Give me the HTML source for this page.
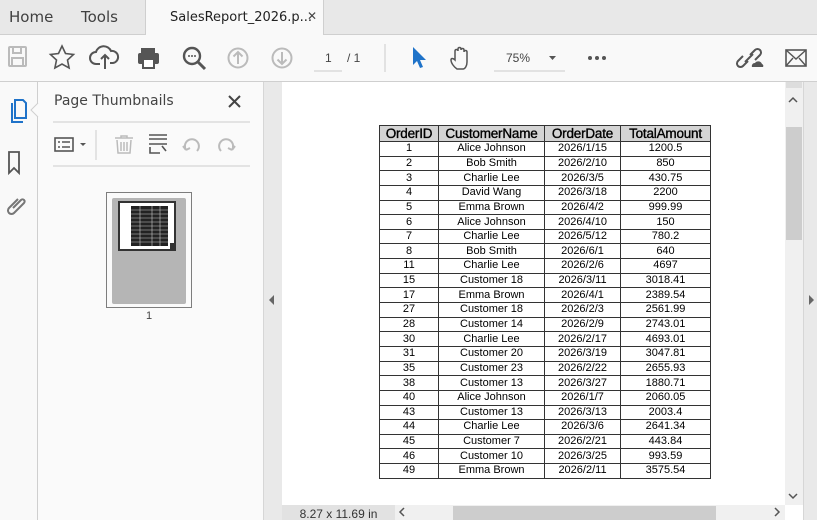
<!DOCTYPE html>
<html><head><meta charset="utf-8"><style>
*{margin:0;padding:0;box-sizing:border-box}
body{width:817px;height:520px;overflow:hidden;background:#fff;font-family:"Liberation Sans",Arial,sans-serif;position:relative}
.abs{position:absolute}
#tabs{left:0;top:0;width:817px;height:35px;background:#e8e8e8;border-bottom:1px solid #cfcfcf}
.tab{top:8px;font-size:15px;color:#404040;font-family:"DejaVu Sans","Liberation Sans",sans-serif}
#atab{left:145px;top:0;width:179px;height:35px;background:#f9f9f9;border-left:1px solid #cfcfcf;border-right:1px solid #cfcfcf}
#tool{left:0;top:35px;width:817px;height:47px;background:#f9f9f9;border-bottom:1px solid #cfcfcf}
#rail{left:0;top:82px;width:38px;height:438px;background:#f9f9f9;border-right:1px solid #cfcfcf}
#panel{left:38px;top:82px;width:225px;height:438px;background:#fafafa}
#strip{left:263px;top:82px;width:19px;height:438px;background:#e9e9e9;border-left:1px solid #d6d6d6}
#rstrip{left:803px;top:82px;width:14px;height:438px;background:#e9e9e9;border-left:1px solid #d6d6d6}
#vs{left:785px;top:82px;width:18px;height:423px;background:#f0f0f0}
table{position:absolute;left:379px;top:125px;border-collapse:collapse;font-size:11px;color:#000}
td,th{border:1px solid #333;text-align:center;height:14.65px;padding:0;line-height:13px}
th{background:#d4d4d4;font-size:13.5px;font-weight:normal;height:16px;-webkit-text-stroke:.35px #000;letter-spacing:-.2px}
</style></head><body>
<div id="tabs" class="abs"></div>
<div class="abs tab" style="left:9px">Home</div>
<div class="abs tab" style="left:81px">Tools</div>
<div id="atab" class="abs"></div>
<div class="abs tab" style="left:170px;top:10px;font-size:13px;color:#222">SalesReport_2026.p...</div>
<div class="abs" style="left:307px;top:9px;font-size:12px;color:#444">✕</div>
<div id="tool" class="abs"></div>
<svg class="abs" style="left:0;top:35px" width="817" height="47">
 <g fill="none" stroke="#bbb" stroke-width="2"><rect x="9" y="12" width="17" height="19" rx="1"/><rect x="13" y="12" width="8" height="6"/><rect x="12" y="23" width="11" height="8"/></g>
 <path d="M62 11l3.5 7.5 8 1-6 5.5 1.6 8-7.1-4-7.1 4 1.6-8-6-5.5 8-1z" fill="none" stroke="#555" stroke-width="1.6"/>
 <path d="M100 29h-4a6 6 0 0 1 0-12 8 8 0 0 1 15-1 6 6 0 0 1 2 12h-3M105 34V20m-4 4l4-4 4 4" fill="none" stroke="#555" stroke-width="2"/>
 <rect x="141" y="13" width="14" height="5" fill="#555"/><rect x="138" y="18" width="21" height="11" rx="2" fill="#555"/><rect x="143" y="24" width="11" height="9" fill="#fff" stroke="#555" stroke-width="2"/>
 <circle cx="192" cy="21" r="8" fill="none" stroke="#555" stroke-width="2.4"/><path d="M198 27l7 7" stroke="#555" stroke-width="3"/><circle cx="189" cy="21" r="1" fill="#555"/><circle cx="192" cy="21" r="1" fill="#555"/><circle cx="195" cy="21" r="1" fill="#555"/>
 <circle cx="238" cy="23" r="9.5" fill="none" stroke="#bbb" stroke-width="2"/><path d="M238 29v-12m-4.5 4.5l4.5-4.5 4.5 4.5" fill="none" stroke="#bbb" stroke-width="2"/>
 <circle cx="282" cy="23" r="9.5" fill="none" stroke="#bbb" stroke-width="2"/><path d="M282 17v12m-4.5-4.5l4.5 4.5 4.5-4.5" fill="none" stroke="#bbb" stroke-width="2"/>
 <line x1="314" y1="36" x2="342" y2="36" stroke="#ccc"/>
 <line x1="385" y1="9" x2="385" y2="37" stroke="#ccc"/>
 <path d="M413 12v18l4-4 3 7 3-1-3-7h6z" fill="#1f73c9"/>
 <path d="M457 34c-3-2-6-6-6-9 0-2 2-2 4 0v-9c0-2 3-2 3 0v-2c0-2 3-2 3 0v1c0-2 3-2 3 0v2c0-2 3-2 3 0v10c0 4-2 7-4 7z" fill="none" stroke="#555" stroke-width="1.5"/>
 <line x1="494" y1="36" x2="565" y2="36" stroke="#ccc"/>
 <path d="M549 21h7l-3.5 4z" fill="#555"/>
 <circle cx="590" cy="23" r="2" fill="#555"/><circle cx="597" cy="23" r="2" fill="#555"/><circle cx="604" cy="23" r="2" fill="#555"/>
 <path d="M748 26l-5 5a3.5 3.5 0 0 1-5-5l5-5M750 20l5-5a3.5 3.5 0 0 1 5 5l-5 5M745 27l8-8" fill="none" stroke="#555" stroke-width="2"/>
 <path d="M752 32a3 3 0 0 1 3-4 4 4 0 0 1 7 1 2 2 0 0 1 1 3z" fill="#555"/>
 <rect x="786" y="15" width="20" height="16" fill="none" stroke="#555" stroke-width="1.6"/><path d="M786 15l10 9 10-9M786 31l7-8M806 31l-7-8" fill="none" stroke="#555" stroke-width="1.4"/>
</svg>
<div class="abs" style="left:325px;top:51px;font-size:12px;color:#444">1</div>
<div class="abs" style="left:347px;top:51px;font-size:12px;color:#444">/ 1</div>
<div class="abs" style="left:506px;top:51px;font-size:12px;color:#444">75%</div>
<div id="rail" class="abs"></div>
<div id="panel" class="abs"></div>
<svg class="abs" style="left:0;top:82px" width="263" height="438">
 <path d="M38 21l-7 7 7 7" fill="#fafafa" stroke="#cfcfcf"/>
 <g fill="none" stroke="#1f73c9" stroke-width="2"><path d="M12 21v19h11"/><path d="M15 18h8l3 3v15h-11z"/></g>
 <path d="M9 70v21l5-5 5 5v-21z" fill="none" stroke="#555" stroke-width="1.8"/>
 <path d="M18 117l-9 9a3 3 0 0 0 5 5l10-10a2 2 0 0 0-3-3l-8 8" fill="none" stroke="#777" stroke-width="2"/>
 <line x1="53" y1="40" x2="250" y2="40" stroke="#ccc"/>
 <line x1="53" y1="84" x2="250" y2="84" stroke="#ccc"/>
 <path d="M229 14l11 11M240 14l-11 11" stroke="#444" stroke-width="2"/>
 <rect x="55" y="56" width="18" height="13" fill="none" stroke="#555" stroke-width="1.6"/><path d="M58 60h2M62 60h8M58 65h2M62 65h8" stroke="#555" stroke-width="1.6"/><path d="M80 61h6l-3 3z" fill="#555"/>
 <line x1="96" y1="48" x2="96" y2="78" stroke="#ccc"/>
 <path d="M115 56h18M121 56v-2h6v2M117 58l1 13h12l1-13M121 60v9M124 60v9M127 60v9" fill="none" stroke="#bbb" stroke-width="1.5"/>
 <path d="M149 53h18M149 57h18M149 62h18M150 65v6h10M162 64l4 5" fill="none" stroke="#555" stroke-width="1.6"/>
 <path d="M186 68a7 7 0 1 1 11 1M186 68l-3-4M186 68l4-2" fill="none" stroke="#bbb" stroke-width="2"/>
 <path d="M232 68a7 7 0 1 0-11 1M232 68l3-4M232 68l-4-2" fill="none" stroke="#bbb" stroke-width="2"/>
 <rect x="106.5" y="110.5" width="85" height="115" fill="none" stroke="#000" stroke-dasharray="1,1"/>
 <rect x="112" y="116" width="74" height="106" rx="2" fill="#b5b5b5"/>
 <rect x="119" y="120" width="56" height="48" fill="#fff" stroke="#333" stroke-width="2"/>
 <rect x="131" y="124" width="37" height="40" fill="#222"/>
 <g stroke="#ccc" stroke-width=".6"><path d="M131 128h37M131 132h37M131 136h37M131 140h37M131 144h37M131 148h37M131 152h37M131 156h37M131 160h37M140 124v40M152 124v40M160 124v40"/></g>
 <rect x="170" y="161" width="6" height="6" fill="#333"/>
</svg>
<div class="abs" style="left:146px;top:310px;font-size:11px;color:#444">1</div>
<div class="abs" style="left:54px;top:93px;color:#444;font-family:'DejaVu Sans','Liberation Sans',sans-serif;font-size:14px">Page Thumbnails</div>
<div id="strip" class="abs"></div>
<svg class="abs" style="left:268px;top:294px" width="8" height="12"><path d="M6 1L1 6l5 5z" fill="#666"/></svg>
<div id="vs" class="abs"></div>
<div class="abs" style="left:786px;top:127px;width:16px;height:113px;background:#cdcdcd"></div>
<div class="abs" style="left:786px;top:82px;width:16px;height:6px;background:#ddd"></div>
<svg class="abs" style="left:788px;top:96px" width="10" height="8"><path d="M1 6l4-4 4 4" fill="none" stroke="#555" stroke-width="1.5"/></svg>
<svg class="abs" style="left:788px;top:492px" width="10" height="8"><path d="M1 2l4 4 4-4" fill="none" stroke="#555" stroke-width="1.5"/></svg>
<div id="rstrip" class="abs"></div>
<svg class="abs" style="left:807px;top:294px" width="8" height="12"><path d="M2 1l5 5-5 5z" fill="#666"/></svg>
<div class="abs" style="left:282px;top:505px;width:113px;height:15px;background:#e2e2e2;font-size:12px;color:#333;text-align:center;line-height:18px">8.27 x 11.69 in</div>
<div class="abs" style="left:395px;top:505px;width:390px;height:15px;background:#f0f0f0"></div>
<div class="abs" style="left:453px;top:506px;width:263px;height:14px;background:#cdcdcd"></div>
<svg class="abs" style="left:398px;top:507px" width="10" height="10"><path d="M6 1L2 5l4 4" fill="none" stroke="#555" stroke-width="1.5"/></svg>
<svg class="abs" style="left:772px;top:507px" width="10" height="10"><path d="M3 1l4 4-4 4" fill="none" stroke="#555" stroke-width="1.5"/></svg>
<table>
<colgroup><col style="width:59px"><col style="width:106px"><col style="width:76px"><col style="width:90px"></colgroup>
<tr><th>OrderID</th><th>CustomerName</th><th>OrderDate</th><th>TotalAmount</th></tr>
<tr><td>1</td><td>Alice Johnson</td><td>2026/1/15</td><td>1200.5</td></tr>
<tr><td>2</td><td>Bob Smith</td><td>2026/2/10</td><td>850</td></tr>
<tr><td>3</td><td>Charlie Lee</td><td>2026/3/5</td><td>430.75</td></tr>
<tr><td>4</td><td>David Wang</td><td>2026/3/18</td><td>2200</td></tr>
<tr><td>5</td><td>Emma Brown</td><td>2026/4/2</td><td>999.99</td></tr>
<tr><td>6</td><td>Alice Johnson</td><td>2026/4/10</td><td>150</td></tr>
<tr><td>7</td><td>Charlie Lee</td><td>2026/5/12</td><td>780.2</td></tr>
<tr><td>8</td><td>Bob Smith</td><td>2026/6/1</td><td>640</td></tr>
<tr><td>11</td><td>Charlie Lee</td><td>2026/2/6</td><td>4697</td></tr>
<tr><td>15</td><td>Customer 18</td><td>2026/3/11</td><td>3018.41</td></tr>
<tr><td>17</td><td>Emma Brown</td><td>2026/4/1</td><td>2389.54</td></tr>
<tr><td>27</td><td>Customer 18</td><td>2026/2/3</td><td>2561.99</td></tr>
<tr><td>28</td><td>Customer 14</td><td>2026/2/9</td><td>2743.01</td></tr>
<tr><td>30</td><td>Charlie Lee</td><td>2026/2/17</td><td>4693.01</td></tr>
<tr><td>31</td><td>Customer 20</td><td>2026/3/19</td><td>3047.81</td></tr>
<tr><td>35</td><td>Customer 23</td><td>2026/2/22</td><td>2655.93</td></tr>
<tr><td>38</td><td>Customer 13</td><td>2026/3/27</td><td>1880.71</td></tr>
<tr><td>40</td><td>Alice Johnson</td><td>2026/1/7</td><td>2060.05</td></tr>
<tr><td>43</td><td>Customer 13</td><td>2026/3/13</td><td>2003.4</td></tr>
<tr><td>44</td><td>Charlie Lee</td><td>2026/3/6</td><td>2641.34</td></tr>
<tr><td>45</td><td>Customer 7</td><td>2026/2/21</td><td>443.84</td></tr>
<tr><td>46</td><td>Customer 10</td><td>2026/3/25</td><td>993.59</td></tr>
<tr><td>49</td><td>Emma Brown</td><td>2026/2/11</td><td>3575.54</td></tr>
</table>
</body></html>
